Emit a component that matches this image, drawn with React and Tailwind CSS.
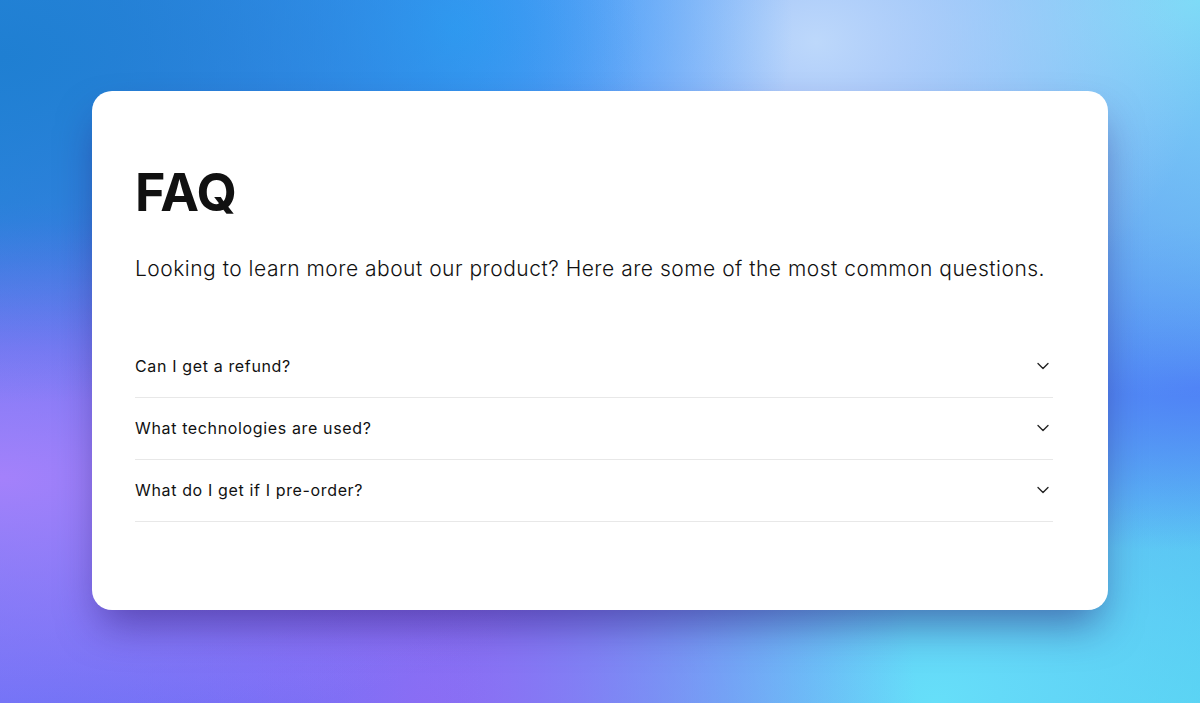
import React from "react";
import { ChevronDown } from "lucide-react";

const questions = [
  "Can I get a refund?",
  "What technologies are used?",
  "What do I get if I pre-order?",
];

function FaqRow({ question }) {
  return (
    <button
      type="button"
      className="flex w-full items-center justify-between border-b border-[#e8e8e8] pt-[18px] pb-[19px] text-left"
    >
      <span className="text-[16px] leading-6 tracking-[0.04em] text-[#111]">{question}</span>
      <ChevronDown size={20} strokeWidth={1.6} className="text-[#222]" />
    </button>
  );
}

export default function App() {
  return (
    <div
      className="min-h-screen w-full pt-[91px] pl-[92px] pb-[93px] font-['Inter',sans-serif] bg-[radial-gradient(ellipse_at_0%_8%,#1f7fd2_0%,transparent_38%),radial-gradient(ellipse_at_38%_4%,#35a3fb_0%,transparent_32%),radial-gradient(ellipse_at_68%_6%,#bdd8fb_0%,transparent_34%),radial-gradient(ellipse_at_100%_0%,#7ddbf7_0%,transparent_40%),radial-gradient(ellipse_at_0%_68%,#a481fb_0%,transparent_38%),radial-gradient(ellipse_at_2%_50%,#6670f4_0%,transparent_30%),radial-gradient(ellipse_at_0%_100%,#6f72f6_0%,transparent_30%),radial-gradient(ellipse_at_100%_55%,#4f82f6_0%,transparent_30%),radial-gradient(ellipse_at_35%_100%,#8f6cf4_0%,transparent_45%),radial-gradient(ellipse_at_78%_100%,#66dff9_0%,transparent_40%),linear-gradient(135deg,#2b8ae0,#6f6ef5_50%,#4fc9ef)]"
    >
      <div className="h-[519px] w-[1016px] rounded-[20px] bg-white pt-[76px] pl-[43px] shadow-[0_22px_40px_-8px_rgba(40,20,110,0.5)]">
        <h1 className="text-[52px] font-bold leading-none tracking-[-0.5px] text-[#111]">
          FAQ
        </h1>
        <p className="mt-[36px] text-[21px] font-light leading-7 tracking-[0.5px] text-[#111]">
          Looking to learn more about our product? Here are some of the most
          common questions.
        </p>
        <div className="mt-[53px] w-[918px]">
          {questions.map((q) => (
            <FaqRow key={q} question={q} />
          ))}
        </div>
      </div>
    </div>
  );
}
